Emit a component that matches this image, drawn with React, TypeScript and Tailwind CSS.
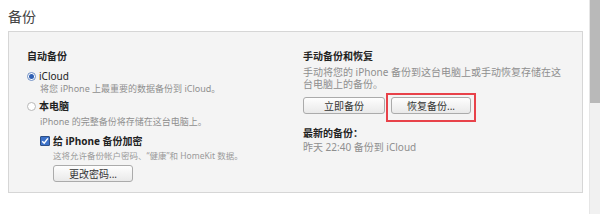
import type { ReactNode } from "react";

const font = "font-['Noto_Sans','Noto_Sans_CJK_SC',sans-serif]";

function Radio({ checked }: { checked?: boolean }) {
  return (
    <span
      className={`flex h-[9px] w-[9px] shrink-0 items-center justify-center rounded-full border bg-white ${
        checked ? "border-[#6f8fc4]" : "border-[#b8b8b8]"
      }`}
    >
      {checked && <span className="h-[5px] w-[5px] rounded-full bg-[#2f5fb3]" />}
    </span>
  );
}

function Checkbox() {
  return (
    <span className="flex h-[10px] w-[10px] shrink-0 items-center justify-center rounded-[1px] border border-[#2d4f86] bg-[#3d72c9]">
      <svg width="8" height="8" viewBox="0 0 8 8">
        <path d="M1.2 4.2 L3.2 6.2 L6.9 1.4" fill="none" stroke="#fff" strokeWidth="1.5" />
      </svg>
    </span>
  );
}

function Button({ children, className = "" }: { children: ReactNode; className?: string }) {
  return (
    <button
      type="button"
      className={`flex h-[17px] items-center justify-center rounded-[3px] border border-[#ababab] bg-gradient-to-b from-[#fefefe] to-[#e9e9e9] text-[10px] leading-none text-[#333] ${className}`}
    >
      {children}
    </button>
  );
}

export default function App() {
  return (
    <div className={`flex h-[214px] w-[600px] bg-white ${font}`}>
      {/* Content */}
      <div className="flex-1 pl-2 pt-[9px]">
        <h1 className="h-[16px] text-[14px] leading-[16px] text-[#444]">备份</h1>

        <div className="mt-[6px] flex h-[162px] w-[575px] border border-[#d6d6d6] bg-[#f4f4f4] pl-[18px] pt-[17px]">
          {/* Automatic backup */}
          <div className="w-[276px]">
            <div className="h-[14px] text-[10px] font-bold leading-[14px] text-[#222]">自动备份</div>

            <div className="mt-[6px] flex h-[14px] items-center gap-[3px]">
              <Radio checked />
              <span className="text-[10px] leading-[14px] text-[#222]">iCloud</span>
            </div>
            <div className="ml-[13px] h-[12px] text-[9px] leading-[12px] text-[#8f8f8f]">
              将您 iPhone 上最重要的数据备份到 iCloud。
            </div>

            <div className="mt-[4px] flex h-[14px] items-center gap-[3px]">
              <Radio />
              <span className="text-[10px] font-bold leading-[14px] text-[#222]">本电脑</span>
            </div>
            <div className="ml-[13px] mt-[3px] h-[12px] text-[9px] leading-[12px] text-[#8f8f8f]">
              iPhone 的完整备份将存储在这台电脑上。
            </div>

            <div className="ml-[13px] mt-[6px] flex h-[14px] items-center gap-[3px]">
              <Checkbox />
              <span className="text-[10px] font-bold leading-[14px] text-[#222]">给 iPhone 备份加密</span>
            </div>
            <div className="ml-[26px] mt-[2px] h-[12px] text-[8.5px] leading-[12px] text-[#9a9a9a]">
              这将允许备份帐户密码、“健康”和 HomeKit 数据。
            </div>
            <Button className="ml-[26px] mt-[3px] w-[80px]">更改密码...</Button>
          </div>

          {/* Manual backup */}
          <div className="w-[264px]">
            <div className="h-[14px] text-[10px] font-bold leading-[14px] text-[#222]">手动备份和恢复</div>
            <p className="mt-[3px] text-[10px] leading-[12px] text-[#8f8f8f]">
              手动将您的 iPhone 备份到这台电脑上或手动恢复存储在这台电脑上的备份。
            </p>

            <div className="mt-[7px] flex gap-[6px]">
              <Button className="w-[82px]">立即备份</Button>
              <div className="relative">
                <Button className="w-[80px]">恢复备份...</Button>
                <span className="pointer-events-none absolute -bottom-[8px] -left-[5px] -right-[5px] -top-[4px] border-2 border-[#e8424a]" />
              </div>
            </div>

            <div className="mt-[12px] h-[14px] text-[10px] font-bold leading-[14px] text-[#222]">最新的备份：</div>
            <div className="mt-[1px] h-[12px] text-[10px] leading-[12px] text-[#8f8f8f]">
              昨天 22:40 备份到 iCloud
            </div>
          </div>
        </div>
      </div>

      {/* Scrollbar */}
      <div className="flex w-[11px] flex-col border-l border-[#e6e6e6] bg-[#f1f1f1]">
        <div className="h-[103px] bg-[#b9b9b9]" />
      </div>
    </div>
  );
}
